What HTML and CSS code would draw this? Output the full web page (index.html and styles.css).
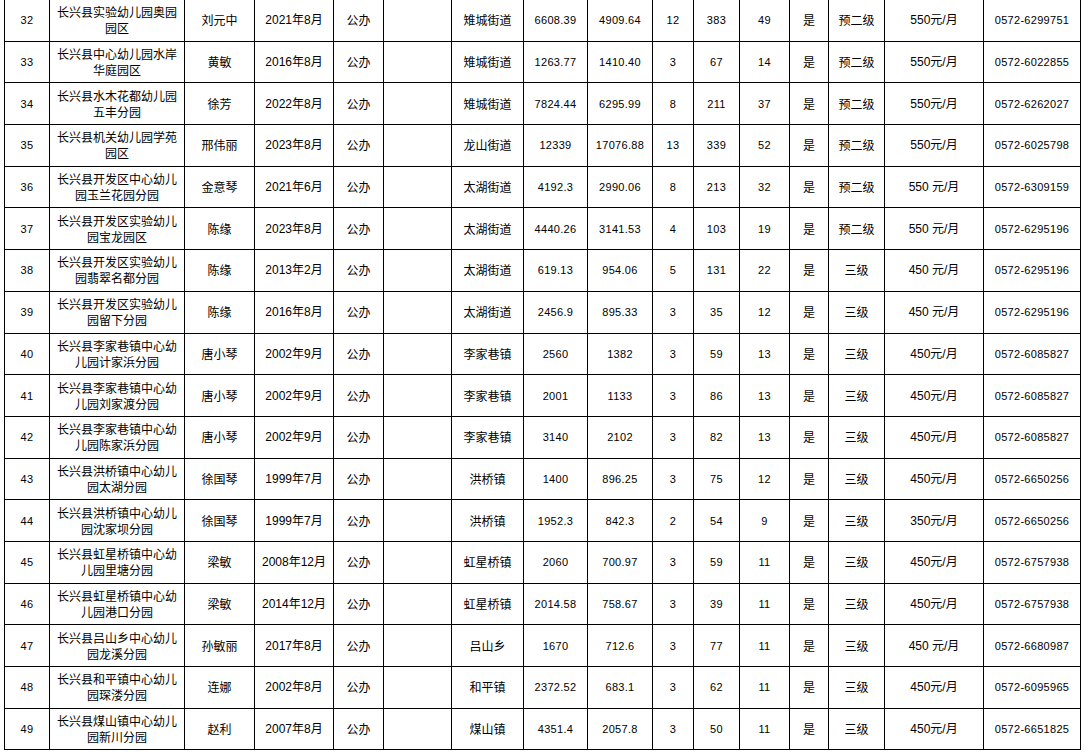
FILE: index.html
```html
<!DOCTYPE html>
<html lang="zh-CN">
<head>
<meta charset="utf-8">
<title>长兴县幼儿园名录</title>
<link rel="stylesheet" href="styles.css">
</head>
<body>
<table class="sheet">
  <colgroup>
    <col class="c-no"><col class="c-name"><col class="c-head"><col class="c-date"><col class="c-type"><col class="c-blank"><col class="c-town"><col class="c-area"><col class="c-build"><col class="c-cls"><col class="c-kids"><col class="c-staff"><col class="c-yes"><col class="c-grade"><col class="c-fee"><col class="c-tel">
  </colgroup>
  <tbody>
    <tr><td class="n">32</td><td class="t">长兴县实验幼儿园奥园园区</td><td class="t">刘元中</td><td class="m">2021年8月</td><td class="t">公办</td><td></td><td class="t">雉城街道</td><td class="n">6608.39</td><td class="n">4909.64</td><td class="n">12</td><td class="n">383</td><td class="n">49</td><td class="t">是</td><td class="t">预二级</td><td class="m">550元/月</td><td class="n">0572-6299751</td></tr>
    <tr><td class="n">33</td><td class="t">长兴县中心幼儿园水岸华庭园区</td><td class="t">黄敏</td><td class="m">2016年8月</td><td class="t">公办</td><td></td><td class="t">雉城街道</td><td class="n">1263.77</td><td class="n">1410.40</td><td class="n">3</td><td class="n">67</td><td class="n">14</td><td class="t">是</td><td class="t">预二级</td><td class="m">550元/月</td><td class="n">0572-6022855</td></tr>
    <tr><td class="n">34</td><td class="t">长兴县水木花都幼儿园五丰分园</td><td class="t">徐芳</td><td class="m">2022年8月</td><td class="t">公办</td><td></td><td class="t">雉城街道</td><td class="n">7824.44</td><td class="n">6295.99</td><td class="n">8</td><td class="n">211</td><td class="n">37</td><td class="t">是</td><td class="t">预二级</td><td class="m">550元/月</td><td class="n">0572-6262027</td></tr>
    <tr><td class="n">35</td><td class="t">长兴县机关幼儿园学苑园区</td><td class="t">邢伟丽</td><td class="m">2023年8月</td><td class="t">公办</td><td></td><td class="t">龙山街道</td><td class="n">12339</td><td class="n">17076.88</td><td class="n">13</td><td class="n">339</td><td class="n">52</td><td class="t">是</td><td class="t">预二级</td><td class="m">550元/月</td><td class="n">0572-6025798</td></tr>
    <tr><td class="n">36</td><td class="t">长兴县开发区中心幼儿园玉兰花园分园</td><td class="t">金意琴</td><td class="m">2021年6月</td><td class="t">公办</td><td></td><td class="t">太湖街道</td><td class="n">4192.3</td><td class="n">2990.06</td><td class="n">8</td><td class="n">213</td><td class="n">32</td><td class="t">是</td><td class="t">预二级</td><td class="m">550 元/月</td><td class="n">0572-6309159</td></tr>
    <tr><td class="n">37</td><td class="t">长兴县开发区实验幼儿园宝龙园区</td><td class="t">陈缘</td><td class="m">2023年8月</td><td class="t">公办</td><td></td><td class="t">太湖街道</td><td class="n">4440.26</td><td class="n">3141.53</td><td class="n">4</td><td class="n">103</td><td class="n">19</td><td class="t">是</td><td class="t">预二级</td><td class="m">550 元/月</td><td class="n">0572-6295196</td></tr>
    <tr><td class="n">38</td><td class="t">长兴县开发区实验幼儿园翡翠名都分园</td><td class="t">陈缘</td><td class="m">2013年2月</td><td class="t">公办</td><td></td><td class="t">太湖街道</td><td class="n">619.13</td><td class="n">954.06</td><td class="n">5</td><td class="n">131</td><td class="n">22</td><td class="t">是</td><td class="t">三级</td><td class="m">450 元/月</td><td class="n">0572-6295196</td></tr>
    <tr><td class="n">39</td><td class="t">长兴县开发区实验幼儿园留下分园</td><td class="t">陈缘</td><td class="m">2016年8月</td><td class="t">公办</td><td></td><td class="t">太湖街道</td><td class="n">2456.9</td><td class="n">895.33</td><td class="n">3</td><td class="n">35</td><td class="n">12</td><td class="t">是</td><td class="t">三级</td><td class="m">450 元/月</td><td class="n">0572-6295196</td></tr>
    <tr><td class="n">40</td><td class="t">长兴县李家巷镇中心幼儿园计家浜分园</td><td class="t">唐小琴</td><td class="m">2002年9月</td><td class="t">公办</td><td></td><td class="t">李家巷镇</td><td class="n">2560</td><td class="n">1382</td><td class="n">3</td><td class="n">59</td><td class="n">13</td><td class="t">是</td><td class="t">三级</td><td class="m">450元/月</td><td class="n">0572-6085827</td></tr>
    <tr><td class="n">41</td><td class="t">长兴县李家巷镇中心幼儿园刘家渡分园</td><td class="t">唐小琴</td><td class="m">2002年9月</td><td class="t">公办</td><td></td><td class="t">李家巷镇</td><td class="n">2001</td><td class="n">1133</td><td class="n">3</td><td class="n">86</td><td class="n">13</td><td class="t">是</td><td class="t">三级</td><td class="m">450元/月</td><td class="n">0572-6085827</td></tr>
    <tr><td class="n">42</td><td class="t">长兴县李家巷镇中心幼儿园陈家浜分园</td><td class="t">唐小琴</td><td class="m">2002年9月</td><td class="t">公办</td><td></td><td class="t">李家巷镇</td><td class="n">3140</td><td class="n">2102</td><td class="n">3</td><td class="n">82</td><td class="n">13</td><td class="t">是</td><td class="t">三级</td><td class="m">450元/月</td><td class="n">0572-6085827</td></tr>
    <tr><td class="n">43</td><td class="t">长兴县洪桥镇中心幼儿园太湖分园</td><td class="t">徐国琴</td><td class="m">1999年7月</td><td class="t">公办</td><td></td><td class="t">洪桥镇</td><td class="n">1400</td><td class="n">896.25</td><td class="n">3</td><td class="n">75</td><td class="n">12</td><td class="t">是</td><td class="t">三级</td><td class="m">450元/月</td><td class="n">0572-6650256</td></tr>
    <tr><td class="n">44</td><td class="t">长兴县洪桥镇中心幼儿园沈家坝分园</td><td class="t">徐国琴</td><td class="m">1999年7月</td><td class="t">公办</td><td></td><td class="t">洪桥镇</td><td class="n">1952.3</td><td class="n">842.3</td><td class="n">2</td><td class="n">54</td><td class="n">9</td><td class="t">是</td><td class="t">三级</td><td class="m">350元/月</td><td class="n">0572-6650256</td></tr>
    <tr><td class="n">45</td><td class="t">长兴县虹星桥镇中心幼儿园里塘分园</td><td class="t">梁敏</td><td class="m">2008年12月</td><td class="t">公办</td><td></td><td class="t">虹星桥镇</td><td class="n">2060</td><td class="n">700.97</td><td class="n">3</td><td class="n">59</td><td class="n">11</td><td class="t">是</td><td class="t">三级</td><td class="m">450元/月</td><td class="n">0572-6757938</td></tr>
    <tr><td class="n">46</td><td class="t">长兴县虹星桥镇中心幼儿园港口分园</td><td class="t">梁敏</td><td class="m">2014年12月</td><td class="t">公办</td><td></td><td class="t">虹星桥镇</td><td class="n">2014.58</td><td class="n">758.67</td><td class="n">3</td><td class="n">39</td><td class="n">11</td><td class="t">是</td><td class="t">三级</td><td class="m">450元/月</td><td class="n">0572-6757938</td></tr>
    <tr><td class="n">47</td><td class="t">长兴县吕山乡中心幼儿园龙溪分园</td><td class="t">孙敏丽</td><td class="m">2017年8月</td><td class="t">公办</td><td></td><td class="t">吕山乡</td><td class="n">1670</td><td class="n">712.6</td><td class="n">3</td><td class="n">77</td><td class="n">11</td><td class="t">是</td><td class="t">三级</td><td class="m">450 元/月</td><td class="n">0572-6680987</td></tr>
    <tr><td class="n">48</td><td class="t">长兴县和平镇中心幼儿园琛溇分园</td><td class="t">连娜</td><td class="m">2002年8月</td><td class="t">公办</td><td></td><td class="t">和平镇</td><td class="n">2372.52</td><td class="n">683.1</td><td class="n">3</td><td class="n">62</td><td class="n">11</td><td class="t">是</td><td class="t">三级</td><td class="m">450元/月</td><td class="n">0572-6095965</td></tr>
    <tr><td class="n">49</td><td class="t">长兴县煤山镇中心幼儿园新川分园</td><td class="t">赵利</td><td class="m">2007年8月</td><td class="t">公办</td><td></td><td class="t">煤山镇</td><td class="n">4351.4</td><td class="n">2057.8</td><td class="n">3</td><td class="n">50</td><td class="n">11</td><td class="t">是</td><td class="t">三级</td><td class="m">450元/月</td><td class="n">0572-6651825</td></tr>
  </tbody>
</table>
</body>
</html>
```

FILE: styles.css
```css
html, body {
  margin: 0;
  padding: 0;
  background: #ffffff;
}

body {
  padding-left: 4px;
  color: #000000;
  font-family: "Liberation Sans", "Noto Sans CJK SC", sans-serif;
  font-size: 12px;
}

.sheet {
  border-collapse: collapse;
  table-layout: fixed;
  width: 1077px;
  margin-top: -1px;
}

.sheet td {
  border: 1px solid #000000;
  height: 40.7px;
  padding: 0 4px;
  text-align: center;
  vertical-align: middle;
  line-height: 16px;
  overflow: hidden;
}

.sheet td.t {
  font-family: "Noto Sans CJK SC", sans-serif;
  font-size: 12px;
}

.sheet td.m {
  font-family: "Liberation Sans", "Noto Sans CJK SC", sans-serif;
  font-size: 12px;
}

.sheet td.n {
  font-family: "Liberation Sans", sans-serif;
  font-size: 11px;
  letter-spacing: 0.3px;
}

.c-no { width: 45px; }
.c-name { width: 135px; }
.c-head { width: 70px; }
.c-date { width: 79px; }
.c-type { width: 50px; }
.c-blank { width: 68px; }
.c-town { width: 72px; }
.c-area { width: 64px; }
.c-build { width: 65px; }
.c-cls { width: 41px; }
.c-kids { width: 46px; }
.c-staff { width: 50px; }
.c-yes { width: 39px; }
.c-grade { width: 56px; }
.c-fee { width: 99px; }
.c-tel { width: 97px; }
```
